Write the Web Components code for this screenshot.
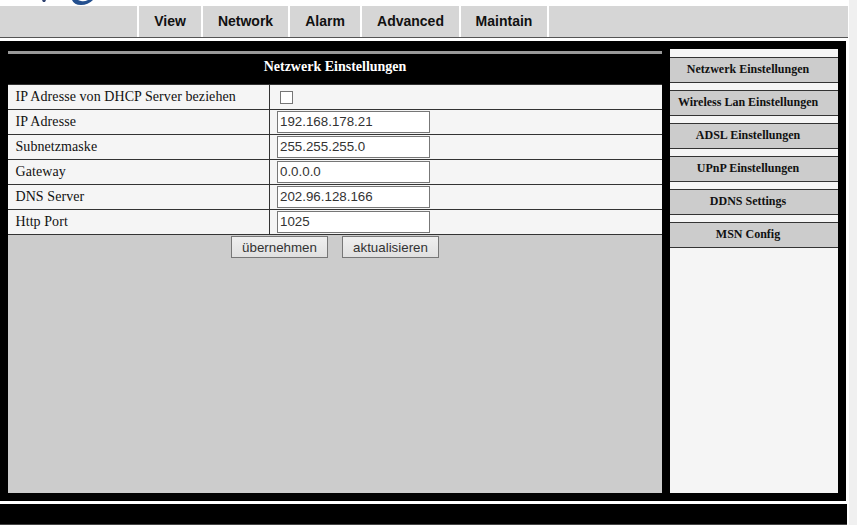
<!DOCTYPE html>
<html><head><meta charset="utf-8">
<style>
html,body{margin:0;padding:0;height:525px;overflow:hidden;background:linear-gradient(90deg,#fff 849px,#f0f0f0 849px)}
</style></head><body>
<template id="t-nav"><style>
:host{display:flex;box-sizing:border-box;width:848px;height:32px;background:#d6d6d6;border-bottom:1px solid #555;font:bold 14px "Liberation Sans",sans-serif;color:#111}
.sp{width:137px}
</style><div class="sp"></div><slot></slot></template>

<template id="t-tab"><style>
:host{display:flex;align-items:center;justify-content:center;box-sizing:border-box;height:31px;border-left:2px solid #fff;padding-bottom:2px;width:var(--w)}
:host(.last){flex:1;width:auto}
</style><slot></slot></template>

<template id="t-row"><style>
:host{display:grid;grid-template-columns:262px 1fr;height:25px;box-sizing:border-box;border-bottom:1px solid #333;background:#f5f5f5;font:14px "Liberation Serif",serif;color:#111}
.l{box-sizing:border-box;border-right:1px solid #333;padding:0 0 0 7.5px;line-height:24px;letter-spacing:.07px}
.v{display:flex;align-items:center;padding-left:7px}
</style><div class="l"><slot name="label"></slot></div><div class="v"><slot></slot></div></template>

<template id="t-field"><style>
:host{display:block;box-sizing:border-box;width:153px;height:22px;border:1px solid #777;background:#fff;font:13.33px "Liberation Sans",sans-serif;color:#333;line-height:20px;padding-left:2px}
</style><slot></slot></template>

<template id="t-check"><style>
:host{display:block;box-sizing:border-box;width:13px;height:13px;margin-left:3px;border:1px solid #767676;background:#fff}
</style></template>

<template id="t-btn"><style>
:host{display:block;box-sizing:border-box;width:97px;height:22px;border:1px solid #777;background:linear-gradient(#efefef,#e0e0e0);font:13.33px "Liberation Sans",sans-serif;color:#333;line-height:21px;text-align:center}
</style><slot></slot></template>

<template id="t-side"><style>
:host{display:block;box-sizing:border-box;height:26px;border-top:1px solid #333;border-bottom:1px solid #333;background:#ccc;font:bold 12px "Liberation Serif",serif;color:#111;text-align:center;padding-right:12px;line-height:23px;margin-bottom:7px}
</style><slot></slot></template>

<template id="t-table"><style>
:host{display:block;box-sizing:border-box;width:654px;height:442px;background:#ccc;flex:none}
.rule{height:3px;background:#999}
h1{margin:0;height:30px;background:#000;color:#fff;font:bold 14px "Liberation Serif",serif;text-align:center;line-height:26px}
.rows{background:#f5f5f5;border-top:1px solid #333}
.btns{display:flex;justify-content:center;gap:14px;margin-top:1px}
</style><div class="rule"></div><h1><slot name="title"></slot></h1><div class="rows"><slot></slot></div><div class="btns"><slot name="buttons"></slot></div></template>

<template id="t-sidebar"><style>
:host{display:block;box-sizing:border-box;width:168px;height:444px;margin-top:-2px;padding-top:8px;background:#f5f5f5;flex:none}
</style><slot></slot></template>

<template id="t-logo"><style>
:host{display:block;height:6px;overflow:hidden;width:848px;background:#fff}
svg{display:block}
</style><svg width="140" height="6" viewBox="0 0 140 6"><path d="M42 0 L46 0 L45 2 L43 2 Z" fill="#2f4270"/><path d="M72 0 Q74 5 81 5 Q88 5 93 0 L88 0 Q84 2 81 1 Q79 .5 78 0 Z" fill="#24508f"/></svg></template>

<template id="t-main"><style>
:host{display:flex;box-sizing:border-box;width:846px;height:460px;margin-top:3px;background:#000;padding:10px 8px 0;gap:8px}
</style><slot></slot></template>

<template id="t-foot"><style>
:host{display:block;box-sizing:border-box;width:847px;height:21px;margin-top:3px;background:#000;border-bottom:1px solid #444}
</style></template>

<script>
for (const [name,tid] of [['x-logo','t-logo'],['x-nav','t-nav'],['x-tab','t-tab'],['x-row','t-row'],['x-field','t-field'],['x-check','t-check'],['x-btn','t-btn'],['x-side','t-side'],['x-panel','t-table'],['x-sidebar','t-sidebar'],['x-main','t-main'],['x-foot','t-foot']]) {
  customElements.define(name,class extends HTMLElement{constructor(){super();this.attachShadow({mode:'open'}).appendChild(document.getElementById(tid).content.cloneNode(true));}});
}
</script>

<x-logo></x-logo>
<x-nav>
<x-tab style="--w:64px">View</x-tab>
<x-tab style="--w:87px">Network</x-tab>
<x-tab style="--w:72px">Alarm</x-tab>
<x-tab style="--w:99px">Advanced</x-tab>
<x-tab style="--w:88px">Maintain</x-tab>
<x-tab class="last"></x-tab>
</x-nav>
<x-main>
<x-panel>
<span slot="title">Netzwerk Einstellungen</span>
<x-row><span slot="label">IP Adresse von DHCP Server beziehen</span><x-check></x-check></x-row>
<x-row><span slot="label">IP Adresse</span><x-field>192.168.178.21</x-field></x-row>
<x-row><span slot="label">Subnetzmaske</span><x-field>255.255.255.0</x-field></x-row>
<x-row><span slot="label">Gateway</span><x-field>0.0.0.0</x-field></x-row>
<x-row><span slot="label">DNS Server</span><x-field>202.96.128.166</x-field></x-row>
<x-row><span slot="label">Http Port</span><x-field>1025</x-field></x-row>
<x-btn slot="buttons">übernehmen</x-btn>
<x-btn slot="buttons">aktualisieren</x-btn>
</x-panel>
<x-sidebar>
<x-side>Netzwerk Einstellungen</x-side>
<x-side>Wireless Lan Einstellungen</x-side>
<x-side>ADSL Einstellungen</x-side>
<x-side>UPnP Einstellungen</x-side>
<x-side>DDNS Settings</x-side>
<x-side>MSN Config</x-side>
</x-sidebar>
</x-main>
<x-foot></x-foot>
</body></html>
